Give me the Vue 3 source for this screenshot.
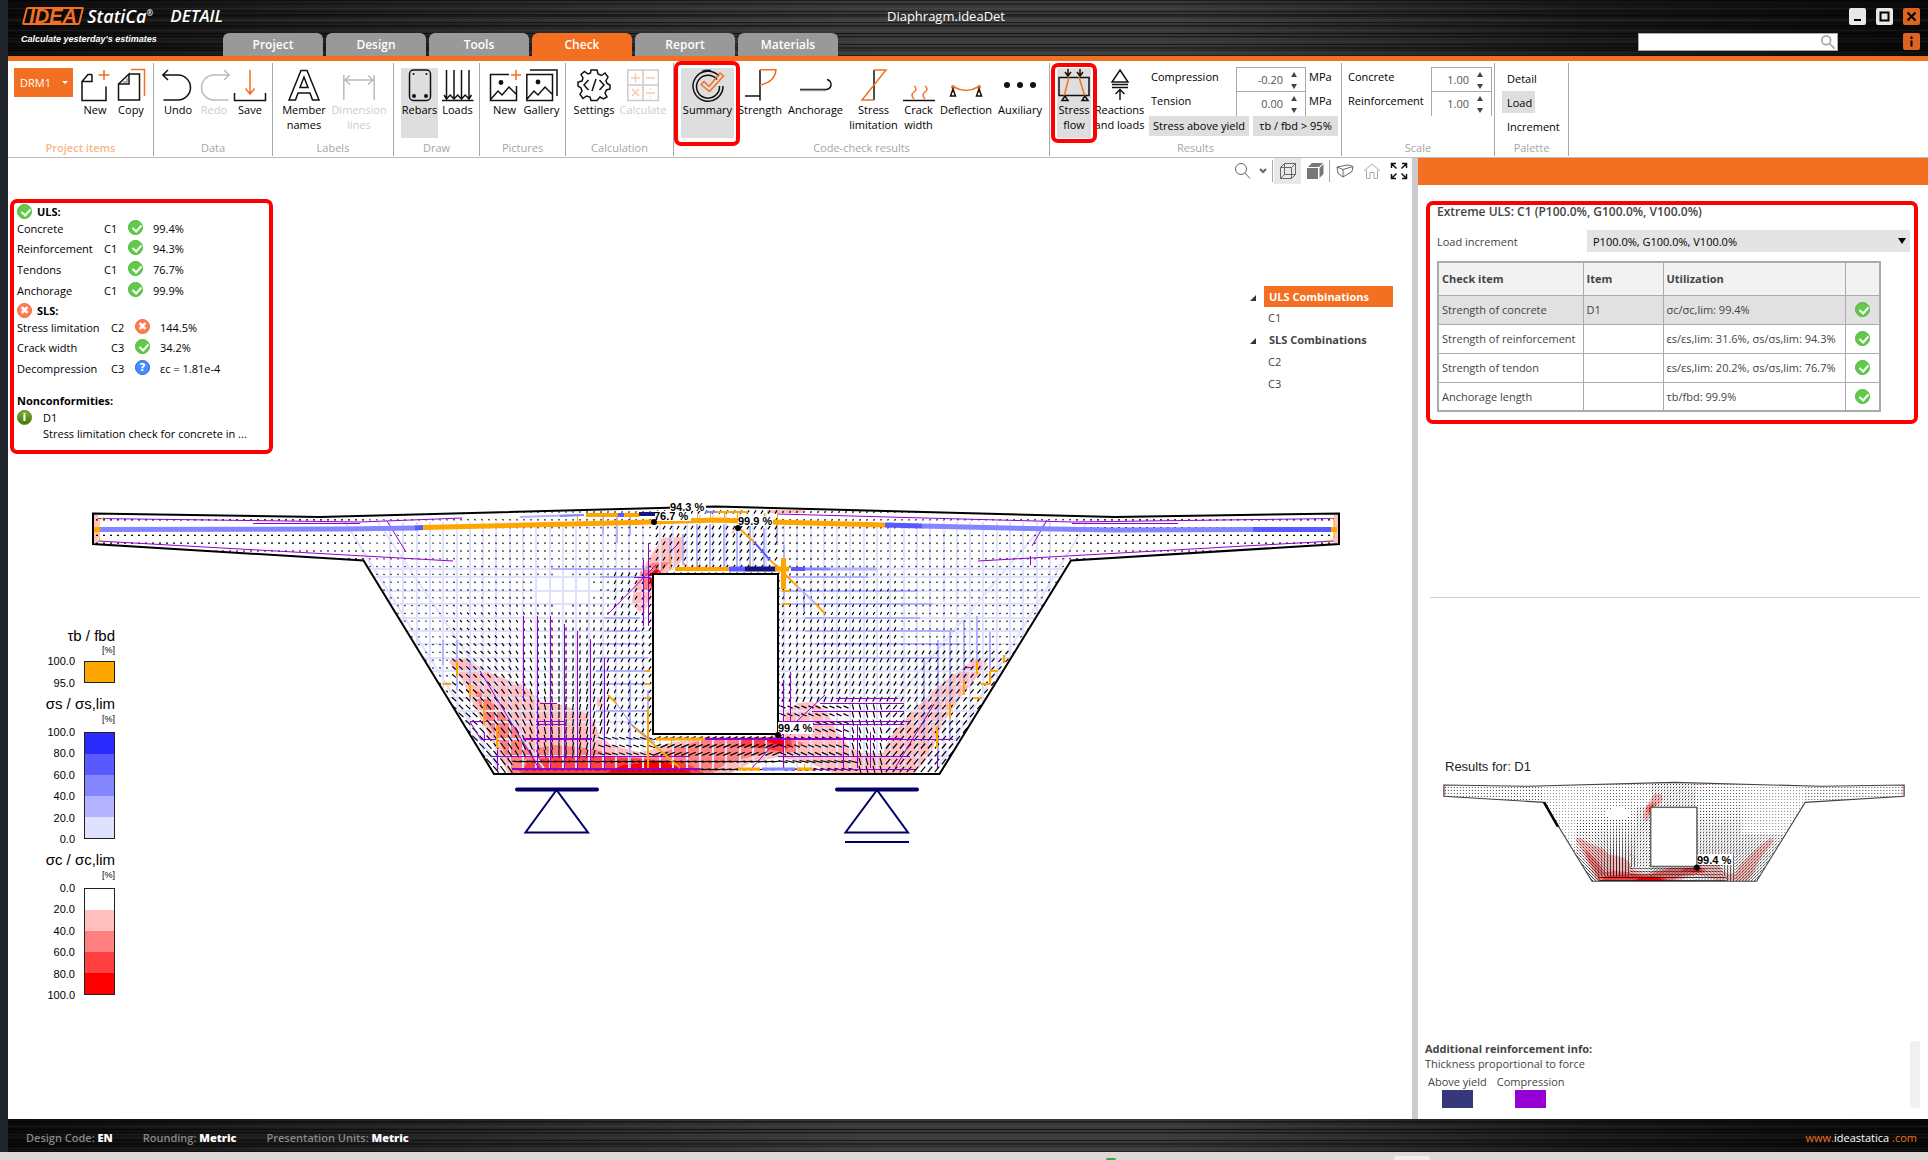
<script setup>
import { ref } from 'vue'

const tabs = ['Project', 'Design', 'Tools', 'Check', 'Report', 'Materials']
const activeTab = ref('Check')

const K = '#111'
const O = '#f36f21'
const icons = {
  new: `<path d="M13 5H9L3 12V31H27V17M13 5V12H3" transform="translate(0 .5)"/><path stroke="${O}" d="M25 1V11M19.500 6H30.500"/>`,
  copy: `<path d="M14 5H24.500V31H3.500V15L14 5V15H3.500"/><path stroke="#999" d="M12 9V13H8"/><path stroke="${O}" d="M16 .5H29.500V27"/>`,
  undo: `<path d="M6 1L.8 6L6 11M1 6H16a12.500 12.500 0 0 1 0 25H1.500"/>`,
  redo: `<path stroke="#bbb" d="M26 1L31.200 6L26 11M31 6H16a12.500 12.500 0 0 0 0 25H30.500"/>`,
  save: `<path d="M.5 24V31.500H31.500V24"/><path stroke="${O}" d="M16 1V24M11.500 19.500L16 25L20.500 19.500"/>`,
  member: `<path d="M1 31L13 1.500H19L31 31H24.500L22 24H10L7.500 31ZM12 18.500H20L16 8Z"/>`,
  dimension: `<path stroke="#bbb" d="M.8 31V6M31.200 31V6M2 11H30M7 6.500L2 11L7 15.500M25 6.500L30 11L25 15.500"/>`,
  rebars: `<rect x="5.500" y="1" width="21" height="30.500" rx="4"/><g fill="${K}" stroke="none"><circle cx="9.500" cy="5" r="1"/><circle cx="22.500" cy="5" r="1"/><circle cx="10" cy="27" r="2"/><circle cx="22" cy="27" r="2"/></g>`,
  loads: `<path d="M4.500 1V29M12 1V29M19.500 1V29M27 1V29M0 31.500H31.500M2 26L4.500 30L8.200 26L12 30L15.700 26L19.500 30L23.200 26L27 30L29.500 26"/>`,
  picnew: `<path d="M20 5.500H1.500V31.500H27.500V17M2 30L9 22L13 26L20 18L27 25"/><circle cx="12" cy="13.500" r="1.700" fill="${K}"/><path stroke="${O}" d="M27 1V11M22 6H32"/>`,
  gallery: `<path d="M.8 5.500H26.500V31.500H.8ZM1 30L8 22L12 26L19 18L26 25M4 1H31V27"/><circle cx="12" cy="13" r="1.700" fill="${K}"/>`,
  settings: `<path d="M13 1H19L20 5L23.500 6.500L27 4L30 8L28 11.500L29 14.500L32 16V20L28.500 21L27 24L29 28L25.500 30L22 28L19 31.500H13L12 28L8.500 27L5 29.500L2 25.500L4 22L3 19L0 17V13L4 12L5 9L3 5.500L6.500 2.500L10 5L12.500 4Z"/><path d="M10.500 11L6 16L10.500 21M21.500 11L26 16L21.500 21M18 10L14 22"/>`,
  calculate: `<rect x=".8" y="1" width="30.500" height="30.500" stroke="#ccc"/><g stroke="#fbc9aa"><path d="M16 1V31M1 16H31" stroke="#ccc"/><path d="M4 9H13M8.500 4.500V13.500M19 9H28M5 20L12 27M12 20L5 27M19 24H28M23.500 19.500V20.500M23.500 27.500V28.500"/></g>`,
  summary: `<path d="M27 7A15 15 0 1 0 31 17M25 10.500A11.500 11.500 0 1 0 27.500 17M19 1.500A15 15 0 0 0 10 2.500"/><path stroke="${O}" d="M9 15.500L12 12.500L17 17.500L28 4L31.500 7L17.500 22.500Z"/>`,
  strength: `<path d="M16 1V31.500M1 27H16"/><path stroke="${O}" d="M16 .8H32Q31 13 16 16"/>`,
  anchorage: `<path d="M0 20.500H25a5 5 0 0 0 2-10"/><path stroke="#999" d="M0 21.500H26"/>`,
  limitation: `<path d="M16 1V31"/><path stroke="${O}" d="M16 1H28L4 31H16"/>`,
  crack: `<path d="M0 31.500H32"/><path stroke="${O}" d="M11 30Q7 26 11 23T11 17M22 30Q18 26 22 23T22 17"/>`,
  deflection: `<path stroke="${O}" d="M4 18Q16 25 28 18"/><circle cx="3" cy="18" r="2" fill="${O}" stroke="none"/><circle cx="29" cy="18" r="2" fill="${O}" stroke="none"/><path d="M3 20L.5 27H5.500ZM29 20L26.500 27H31.500Z"/>`,
  auxiliary: `<g fill="${K}" stroke="none"><circle cx="3" cy="16" r="3"/><circle cx="16" cy="16" r="3"/><circle cx="29" cy="16" r="3"/></g>`,
  flow: `<rect x="1" y="8.500" width="30" height="18"/><path stroke="${O}" d="M11 8L6 28M21 8L27 28"/><path d="M10 0V7M7 3L10 7L13 3M22 0V7M19 3L22 7L25 3M7 27L4 31.500H10ZM27 27L24 31.500H30Z"/>`,
  reactions: `<path d="M16 1L24 13H8ZM8 15.500H24M8 18.500H24M16 31V21M11.500 25L16 20.500L20.500 25"/>`,
}

const groups = [
  { id: 'items', label: 'Project items', strong: true, buttons: [['new', 'New'], ['copy', 'Copy']] },
  { id: 'data', label: 'Data', buttons: [['undo', 'Undo'], ['redo', 'Redo', 'off'], ['save', 'Save']] },
  { id: 'labels', label: 'Labels', buttons: [['member', 'Member names'], ['dimension', 'Dimension lines', 'off']] },
  { id: 'draw', label: 'Draw', buttons: [['rebars', 'Rebars', 'on'], ['loads', 'Loads']] },
  { id: 'pictures', label: 'Pictures', buttons: [['picnew', 'New'], ['gallery', 'Gallery']] },
  { id: 'calc', label: 'Calculation', buttons: [['settings', 'Settings'], ['calculate', 'Calculate', 'off']] },
  {
    id: 'checks', label: 'Code-check results', buttons: [
      ['summary', 'Summary', 'on marked'], ['strength', 'Strength'], ['anchorage', 'Anchorage'],
      ['limitation', 'Stress limitation'], ['crack', 'Crack width'], ['deflection', 'Deflection'], ['auxiliary', 'Auxiliary'],
    ],
  },
  { id: 'results', label: 'Results', buttons: [['flow', 'Stress flow', 'on marked tight'], ['reactions', 'Reactions and loads']] },
]

const spins = {
  results: [['compression', 'Compression', '-0.20', 'MPa'], ['tension', 'Tension', '0.00', 'MPa']],
  scale: [['concrete', 'Concrete', '1.00'], ['reinforcement', 'Reinforcement', '1.00']],
}

const uls = [['Concrete', 'C1', 'ok', '99.4%'], ['Reinforcement', 'C1', 'ok', '94.3%'], ['Tendons', 'C1', 'ok', '76.7%'], ['Anchorage', 'C1', 'ok', '99.9%']]
const sls = [['Stress limitation', 'C2', 'bad', '144.5%'], ['Crack width', 'C3', 'ok', '34.2%'], ['Decompression', 'C3', 'ask', 'εc = 1.81e-4']]
const checks = [
  ['Strength of concrete', 'D1', 'σc/σc,lim: 99.4%'],
  ['Strength of reinforcement', '', 'εs/εs,lim: 31.6%, σs/σs,lim: 94.3%'],
  ['Strength of tendon', '', 'εs/εs,lim: 20.2%, σs/σs,lim: 76.7%'],
  ['Anchorage length', '', 'τb/fbd: 99.9%'],
]
const legends = [
  { id: 'bond', title: 'τb / fbd', ticks: ['100.0', '95.0'], colors: ['a1'] },
  { id: 'steel', title: 'σs / σs,lim', ticks: ['100.0', '80.0', '60.0', '40.0', '20.0', '0.0'], colors: ['b5', 'b4', 'b3', 'b2', 'b1'] },
  { id: 'conc', title: 'σc / σc,lim', ticks: ['0.0', '20.0', '40.0', '60.0', '80.0', '100.0'], colors: ['r1', 'r2', 'r3', 'r4', 'r5'] },
]

/* ---- cross-section geometry ---- */
const outline = 'M93 513.500L320 517L716 506.500L1115 517L1339 513.500V544L1071 560.500L939.500 774H494L363.500 560.500L93 544Z'
const hole = { x: 653, y: 574, width: 125, height: 160 }

const stress = [
  ['#ffbfbf', 'M449 662L452 658L458 657L468 660L488 672L513 682L523 685L541 702L562 705L586 713L595 723L600 737L611 745L639 752L651 750L668 743L709 737H770L782 720L787 710L798 703L812 702L826 710L835 728L849 747L862 753H883L890 737L911 713L934 690L957 672L977 658L987 663L980 673L961 697L943 723L931 753L915 773H833L810 763L778 757L750 763L732 773H508L496 750L480 717L462 680Z'],
  ['#ffbfbf', 'M662 538L682 537L686 552L680 563L668 572L654 575L651 600L645 610L639 612L632 602L634 587L641 572L650 557Z'],
  ['#ffbfbf', 'M767 510H805L802 513H767ZM93 515H98V543H93ZM1334 515H1339V543H1334ZM731 533L736 527L734 534ZM598 697L602 703L598 708L596 703Z'],
  ['#ff8080', 'M474 690L482 693L508 720L529 750L554 745L586 748L631 757L660 753L692 743L709 738H791L803 743L796 752L764 753L727 763L713 773H513L500 743L484 717Z'],
  ['#ff8080', 'M640 572L652 563L670 562L660 573L654 575L651 592L645 592Z'],
  ['#ff4040', 'M520 773L529 760L570 755L631 758L684 762L704 773ZM735 746L745 738L790 737L792 745L783 752L760 748Z'],
  ['#ff0000', 'M606 773L623 765L660 761L680 767L692 773ZM648 576L656 569L660 571L654 575L652 588ZM764 740L785 738L783 747Z'],
]

/* Principal stress directions sampled on a regular grid */
function hatch(step, rise, gain) {
  let d = ''
  for (let y = 512; y < 773; y += rise) {
    for (let x = 97; x < 1336; x += step) {
      if (((x - 565) / 32) ** 2 + ((y - 590) / 16) ** 2 < 1) continue
      let angle
      let len
      if (x < 364 || x > 1071) {
        angle = 2
        len = 2
      } else if (y > 758 && x > 515 && x < 860) {
        angle = x < 600 ? 5 : x < 778 ? -8 : 14
        len = 9
      } else if (x < 653) {
        angle = x < 560 ? 42 + 48 * Math.max(0, (x - 450) / 110) ** 2 : 92 + 35 * ((x - 560) / 93)
        len = 1.6 + Math.max(0, y - 590) / 26 - (x < 450 ? 3 : 0)
        if (x > 610 && y > 570) len = 4
        if (y > 735 && x > 600) { angle = 20; len = 6 }
      } else if (x < 778) {
        angle = y < 574 ? -58 : -24
        len = y < 574 ? 4 : 8
      } else {
        angle = y < 700 ? -66 + Math.max(0, (x - 860) / 8) : x < 850 ? 24 : x < 885 ? 75 : -50
        len = 1.9 + Math.max(0, y - 560) / 40
        if (x > 900 && y < 650) len = 1.6
      }
      len = Math.max(1.4, len) * gain
      const a = (angle * Math.PI) / 180
      const dx = (Math.cos(a) * len) / 2
      const dy = (Math.sin(a) * len) / 2
      d += `M${(x - dx).toFixed(1)} ${(y - dy).toFixed(1)}L${(x + dx).toFixed(1)} ${(y + dy).toFixed(1)}`
    }
  }
  return d
}
const flowMain = hatch(7, 7.8, 1)
const flowMini = hatch(8.13, 8.13, 1.3)

/* Light reinforcement mesh */
let mesh = ''
for (let x = 390; x < 650; x += 13.3) mesh += `M${x.toFixed(0)} 522V770`
for (let x = 660; x < 778; x += 13.3) mesh += `M${x.toFixed(0)} 514V570M${x.toFixed(0)} 738V770`
for (let x = 784; x < 1060; x += 13.3) mesh += `M${x.toFixed(0)} 522V770`
for (const y of [569, 577, 591, 604, 618, 631, 644, 658, 671, 684, 698, 711, 722, 739, 756]) mesh += `M368 ${y}H652M779 ${y}H1066`
mesh += 'M345 522L500 770M378 522L545 770M1087 522L936 770M1046 522L895 700'

const V = '#9400d3'
const A = '#ffa500'
const B = '#8585ff'
const L = '#b3b3ff'
const D = '#5959ff'
const N = '#141482'
const bars = [
  [L, 2, 'M551 569H650M600 577H650M604 618H640M604 631H640M596 644H640M596 658H648M596 671H648M596 684H648M596 711H648M630 680V768M648 690V768M443 640V665M457 640V665M457 655V690M470 660V700'],
  [L, 2, 'M784 577H868M784 591H918M784 604H933M805 618H920M805 631H955M815 644H960M820 658H940M924 660V745M938 640V760M950 630V740M964 620V690M977 616V670M990 632V670M784 545V600M804 590V612'],
  [L, 2, 'M617 514V543M603 514V535M630 514V535M670 535V565M683 534V565M697 524V570M710 524V570M724 524V570M737 530V570M750 526V570M764 528V570M777 522V545M784 545V600'],
  [L, 2, 'M632 739H650'],
  [V, 1, 'M98 518.500L360 522M253 523.500H360M98 541L453 561M360 522L462 518M387 521L406 552'],
  [V, 1, 'M1334 518.500L1072 522M1178 523.500H1072M1334 541L978 561M1072 522L778 514M1047 520L1032 546M1030.500 556V565'],
  [V, 1, 'M523.500 616V701M537.500 616V770M550.500 616V770M564.500 624V770M577.500 631V770M590.500 639V770M604.500 658V770'],
  [V, 1, 'M648.500 543V626M643.500 560V626M608 614L656 565M634 577.500H651M672 550L678 544'],
  [V, 1, 'M470 721.500H487M470 722L481 739.500H497M484.500 733V742M480 671L540 770M540 703.500H557M536 721.500H564M536 724.500H564M491 756.500H690M497.500 750V770'],
  [V, 2, 'M523 739H592M512 769H700M700 739H903'],
  [V, 1, 'M783.500 680V770M790.500 672V735M820 703.500H904M836 698.500H898M812 711.500H904M784 724.500H904M784 721.500H910M778 756.500H910M780 769.500H915M843.500 724V768M857.500 724V768M870.500 732V768M895 768L934 704M752 768L780 737L825 695M966 667.500H972M937.500 755V768M903 739.500H953'],
  [A, 1, 'M99 529V522Q99 518 104 518M99 529V537Q99 541 103 541M1334 529V521Q1334 518 1330 518M1334 529V536Q1334 541 1326 541'],
  [A, 2, 'M457 661V676M443 684H451M470 683V698M484 703V725M497 725V748M645 671H650M645 684H650M645 698H650M648 708V768M608 695L616 703M632 725L680 768'],
  [B, 1, 'M616 703L632 725L655 743'],
  [A, 2, 'M977 661V674M964 680V695M950 703V718M937 727V748M1004 655V663M990 671H998M990 671V684H981M973 698H982M738 527L754 542M770 560L798 587M815 603L825 614'],
  [D, 2, 'M754 542L770 560'], [L, 2, 'M798 587L815 603'],
  [A, 3, 'M656 739H705M738 769H760M797 769H813'], [B, 3, 'M762 769H795'],
  [A, 1, 'M577.500 514V523M684.500 514V521M697.500 514V521M710.500 511V521M724.500 511V521M737.500 513V521M764.500 513V521M777.500 512V527M670.500 555V570M684.500 563V570M697.500 563V570M750.500 563V570M671.500 740V745M804.500 764V771'],
  [L, 2, 'M520 517L577 515'], [B, 2, 'M560 516L584 515'], [A, 4, 'M586 515H639'], [D, 4, 'M618 515H624'], [N, 4, 'M639 514H655'], [B, 2, 'M705 512H716'], [A, 2, 'M716 512H748'],
  [A, 4, 'M675 569H730'], [D, 5, 'M729 569H745'], [N, 5, 'M745 569H776'], [A, 5, 'M775 569H789M783.500 558V589'], [D, 4, 'M791 569H805'], [B, 3, 'M805 569H830'], [L, 3, 'M830 569H877'],
  [A, 2, 'M782 591H790M782 604H790'],
  [B, 5, 'M100 529.500L345 529L416 528'], [D, 5, 'M415 528L423 527.500'], [A, 5, 'M423 527.500L654 522L716 520L773 522L885 525'],
  [D, 5, 'M885 525L922 526'], [B, 5, 'M922 526L1053 529L1115 530L1253 529.500'], [D, 5, 'M1253 529.500H1331'], [A, 5, 'M94 529.500H100M1331 529.500H1337'],
]
</script>

<template>
  <div class="desktop">
    <div class="app">
      <header class="titlebar metal">
        <div class="brand">
          <div class="logo"><span class="idea">IDEA</span><b>StatiCa<sup>®</sup></b><i>DETAIL</i></div>
          <div class="slogan">Calculate yesterday's estimates</div>
        </div>
        <nav class="tabs">
          <button v-for="t in tabs" :key="t" :class="{ active: t === activeTab }" @click="activeTab = t">{{ t }}</button>
        </nav>
        <h1>Diaphragm.ideaDet</h1>
        <div class="tools">
          <div class="winbtns">
            <button aria-label="Minimize"><svg viewBox="0 0 17 17"><path d="M5 12h7" stroke-width="2" /></svg></button>
            <button aria-label="Maximize"><svg viewBox="0 0 17 17"><path d="M4.500 4.500h8v8h-8z" stroke-width="2" /></svg></button>
            <button class="hot" aria-label="Close"><svg viewBox="0 0 17 17"><path d="M4.500 4.500l8 8M12.500 4.500l-8 8" stroke-width="2" /></svg></button>
          </div>
          <div class="findrow">
            <div class="find">
              <input type="text" aria-label="Search">
              <svg viewBox="0 0 18 18"><circle cx="7" cy="7" r="5" /><path d="M10.500 10.500l6 6" /></svg>
            </div>
            <button class="info hot" aria-label="Info"><svg viewBox="0 0 17 17"><path d="M8.500 3.500v2.500M8.500 7.500v6" stroke-width="2" /></svg></button>
          </div>
        </div>
      </header>

      <section class="ribbon">
        <div v-for="g in groups" :key="g.id" class="group" :class="g.id">
          <div class="body">
            <button v-if="g.id === 'items'" class="picker">DRM1 <span></span></button>
            <button v-for="b in g.buttons" :key="b[0]" class="cmd" :class="b[2]">
              <svg viewBox="0 0 32 33" v-html="icons[b[0]]"></svg>
              <span>{{ b[1] }}</span>
            </button>
            <div v-if="g.id === 'results'" class="fields">
              <div v-for="s in spins.results" :key="s[0]" class="field">
                <label :for="s[0]">{{ s[1] }}</label>
                <div class="spin wide"><input :id="s[0]" type="text" :value="s[2]"><span class="ud"><button aria-label="Up"></button><button class="down" aria-label="Down"></button></span></div>
                <span class="unit">{{ s[3] }}</span>
              </div>
              <div class="toggles"><button>Stress above yield</button><button>τb / fbd &gt; 95%</button></div>
            </div>
          </div>
          <div class="caption" :class="{ strong: g.strong }">{{ g.label }}</div>
        </div>
        <div class="group scale">
          <div class="body">
            <div class="fields">
              <div v-for="s in spins.scale" :key="s[0]" class="field">
                <label :for="s[0]">{{ s[1] }}</label>
                <div class="spin"><input :id="s[0]" type="text" :value="s[2]"><span class="ud"><button aria-label="Up"></button><button class="down" aria-label="Down"></button></span></div>
              </div>
            </div>
          </div>
          <div class="caption">Scale</div>
        </div>
        <div class="group palette">
          <div class="body"><button>Detail</button><button class="on">Load</button><button>Increment</button></div>
          <div class="caption">Palette</div>
        </div>
      </section>

      <main>
        <section class="canvas">
          <svg class="scene" viewBox="8 158 1404 961" role="img" aria-label="Stress flow in diaphragm">
            <defs>
              <clipPath id="section"><path :d="outline" /></clipPath>
            </defs>
            <g clip-path="url(#section)" fill="none">
              <path v-for="(s, i) in stress" :key="'s' + i" :fill="s[0]" :d="s[1]" />
              <path :d="mesh" stroke="#e0e0ff" stroke-width="2" />
              <path v-for="(b, i) in bars.slice(0, 4)" :key="'l' + i" :stroke="b[0]" :stroke-width="b[1]" :d="b[2]" />
              <path :d="flowMain" stroke="#000" stroke-width="1.200" />
              <path v-for="(b, i) in bars.slice(4)" :key="'b' + i" :stroke="b[0]" :stroke-width="b[1]" :d="b[2]" />
            </g>
            <path :d="outline" fill="none" stroke="#000" stroke-width="2" />
            <rect v-bind="hole" fill="#fff" stroke="#000" stroke-width="2" />
            <g class="marks">
              <rect x="670" y="502" width="36" height="9" /><text x="670" y="511">94.3 %</text>
              <rect x="655" y="511" width="36" height="10" /><text x="654" y="520">76.7 %</text>
              <rect x="738" y="516" width="35" height="10" /><text x="738" y="525">99.9 %</text>
              <rect x="778" y="722" width="35" height="12" /><text x="778" y="732">99.4 %</text>
              <circle cx="654" cy="522" r="3" /><circle cx="738" cy="528" r="3" /><circle cx="778" cy="735" r="3" />
            </g>
            <g fill="none" stroke="#000066" stroke-width="2">
              <path d="M517 789.500H597M837 789.500H917" stroke-width="4" stroke-linecap="round" />
              <path d="M556.500 790L525.500 832.500H588ZM877 790L845.500 832.500H908ZM845 842H909" />
            </g>
          </svg>

          <div class="viewbar">
            <button aria-label="Zoom"><svg viewBox="0 0 18 18"><circle cx="8" cy="7" r="5.500" /><path d="M12 11l5 5.500" /></svg></button>
            <button class="chev" aria-label="Zoom options"><svg viewBox="0 0 8 18"><path d="M1 7l3 3 3-3" stroke-width="2" /></svg></button>
            <i></i>
            <button class="on" aria-label="Wireframe"><svg viewBox="0 0 18 18"><path d="M1.500 5.500h11v11h-11zM1.500 5.500l4-4h11l-4 4M16.500 1.500v11l-4 4M5.500 1.500v11h11M5.500 12.500l-4 4" /></svg></button>
            <button aria-label="Solid"><svg viewBox="0 0 18 18"><path d="M1 6h11v11h-11zM2 5l4-4h11l-4 4zM13.500 6l4-4v10l-4 4z" fill="#777" stroke="none" /></svg></button>
            <i></i>
            <button aria-label="Perspective"><svg viewBox="0 0 18 18"><path d="M1 5L12 3L17 4.500L7 7.500ZM7 7.500V15L2 11.500L1 5M7 15L16 9.500L17 4.500" /></svg></button>
            <button aria-label="Home"><svg viewBox="0 0 18 18"><path d="M1 9l8-7 8 7M3.500 8v8.500h3.500v-6h4v6h3.500V8" stroke="#aaa" /></svg></button>
            <button aria-label="Fit"><svg viewBox="0 0 18 18"><path d="M1.500 6V1.500H6M2 2l4.500 4.500M12 1.500h4.500V6M16 2l-4.500 4.500M1.500 12v4.500H6M2 16l4.500-4.500M12 16.500h4.500V12M16 16l-4.500-4.500" stroke="#111" stroke-width="1.500" /></svg></button>
          </div>

          <aside class="summary">
            <h2><span class="st ok"></span>ULS:</h2>
            <div v-for="r in uls" :key="r[0]" class="row"><span>{{ r[0] }}</span><span>{{ r[1] }}</span><span class="st" :class="r[2]"></span><span>{{ r[3] }}</span></div>
            <h2><span class="st bad"></span>SLS:</h2>
            <div v-for="r in sls" :key="r[0]" class="row sls"><span>{{ r[0] }}</span><span>{{ r[1] }}</span><span class="st" :class="r[2]"></span><span>{{ r[3] }}</span></div>
            <h3>Nonconformities:</h3>
            <div class="note"><span class="st inf"></span><p>D1<br>Stress limitation check for concrete in ...</p></div>
          </aside>

          <ul class="tree">
            <li class="top sel"><span>ULS Combinations</span></li>
            <li>C1</li>
            <li class="top"><span>SLS Combinations</span></li>
            <li>C2</li>
            <li>C3</li>
          </ul>

          <div class="legends">
            <div v-for="l in legends" :key="l.id" class="legend" :class="l.id">
              <div class="lt">{{ l.title }}</div>
              <div class="lu">[%]</div>
              <div class="lb">
                <div class="ticks"><span v-for="t in l.ticks" :key="t">{{ t }}</span></div>
                <div class="ramp"><span v-for="c in l.colors" :key="c" :class="c"></span></div>
              </div>
            </div>
          </div>
        </section>

        <section class="side">
          <div class="sidehead"></div>
          <div class="extreme">
            <h2>Extreme ULS: C1 (P100.0%, G100.0%, V100.0%)</h2>
            <div class="inc">
              <label for="incr">Load increment</label>
              <div class="pick"><select id="incr"><option>P100.0%, G100.0%, V100.0%</option></select></div>
            </div>
            <table>
              <thead><tr><th class="c1">Check item</th><th class="c2">Item</th><th class="c3">Utilization</th><th class="c4"></th></tr></thead>
              <tbody>
                <tr v-for="c in checks" :key="c[0]"><td>{{ c[0] }}</td><td>{{ c[1] }}</td><td>{{ c[2] }}</td><td><span class="st ok"></span></td></tr>
              </tbody>
            </table>
          </div>
          <hr>
          <h3>Results for: D1</h3>
          <svg class="mini" viewBox="80 500 1272 282" role="img" aria-label="Results for D1">
            <g clip-path="url(#section)">
              <path v-for="(s, i) in stress" :key="i" :fill="s[0]" :d="s[1]" />
              <path :d="flowMini" stroke="#000" stroke-width="2.200" />
            </g>
            <path :d="outline" fill="none" stroke="#444" stroke-width="3" />
            <path d="M364 560L402 626" stroke="#000" stroke-width="7" />
            <rect v-bind="hole" fill="#fff" stroke="#666" stroke-width="4" />
            <rect x="780" y="700" width="95" height="30" fill="#fff" />
            <circle cx="778" cy="737" r="8" /><text x="778" y="727">99.4 %</text>
          </svg>
          <div class="extra">
            <div>
              <b>Additional reinforcement info:</b>
              <p>Thickness proportional to force</p>
              <div class="keys"><div>Above yield<span class="ky"></span></div><div>Compression<span class="kc"></span></div></div>
            </div>
            <div class="track"></div>
          </div>
        </section>
      </main>

      <footer class="metal">
        <span>Design Code: <b>EN</b></span><span>Rounding: <b>Metric</b></span><span>Presentation Units: <b>Metric</b></span>
        <a href="#">www.<em>ideastatica</em> .com</a>
      </footer>
    </div>
    <div class="taskbar"><span class="led"></span><span class="pill"></span></div>
  </div>
</template>

<style>
body { margin: 0; }
</style>

<style scoped>
* { box-sizing: border-box; }
button, input, select { font: inherit; color: inherit; border: 0; background: none; padding: 0; margin: 0; }
h1, h2, h3, p, ul { margin: 0; padding: 0; font-size: 11px; }
svg { display: block; }
.desktop { min-height: 100vh; display: flex; flex-direction: column; background: #20242b; font: 11px/15px "Open Sans", "Noto Sans", sans-serif; color: #111; }
.app { flex: 1; margin-left: 8px; display: flex; flex-direction: column; background: #fff; }
.metal {
  background:
    repeating-linear-gradient(0deg, rgba(0,0,0,.5) 0 1px, transparent 1px 3px, rgba(255,255,255,.06) 3px 4px, transparent 4px 7px, rgba(0,0,0,.4) 7px 9px, transparent 9px 11px),
    repeating-linear-gradient(0deg, rgba(255,255,255,.04) 0 2px, transparent 2px 5px, rgba(0,0,0,.3) 5px 6px, transparent 6px 17px),
    linear-gradient(90deg, #0a0a0a, #1c1c1c 14%, #3a3a3a 45%, #3a3a3a 60%, #181818 82%, #080808);
}
.titlebar { position: relative; height: 61px; border-bottom: 5px solid #f36f21; display: flex; align-items: flex-end; color: #fff; }
.brand { width: 215px; height: 56px; padding: 7px 0 0 13px; white-space: nowrap; }
.logo { display: flex; align-items: center; height: 18px; font: italic bold 18px/18px "Open Sans", sans-serif; }
.idea { position: relative; width: 67px; margin-left: 1px; text-align: center; color: #f36f21; font: italic bold 20px/18px "Liberation Sans", sans-serif; z-index: 0; }
.idea::before { content: ""; position: absolute; inset: 0 2px; border: 2px solid #f36f21; background: #0a0a0a; transform: skewX(-14deg); z-index: -1; border-radius: 2px; }
.logo b { margin-left: 3px; font-weight: 600; }
.logo sup { font-size: 8px; line-height: 8px; vertical-align: 7px; }
.logo i { margin-left: 17px; font-size: 17px; font-weight: 600; }
.slogan { margin-top: 7px; font: italic bold 9px/14px "Liberation Sans", sans-serif; }
.tabs { display: flex; gap: 3px; }
.tabs button { width: 100px; height: 23px; border-radius: 6px 6px 0 0; background: #999; font-size: 12px; font-weight: 600; line-height: 23px; }
.tabs button.active { background: #f36f21; }
.titlebar h1 { position: absolute; left: -44px; right: 0; top: 8px; margin: 0 auto; width: max-content; font-size: 13px; line-height: 17px; font-weight: normal; }
.tools { margin-left: auto; padding: 0 8px 5px 0; display: flex; flex-direction: column; gap: 8px; align-items: flex-end; }
.winbtns { display: flex; gap: 10px; }
.winbtns button, .info { width: 17px; height: 17px; background: #e8e8e8; border-radius: 2px; }
.tools .hot { background: #dc6420; }
.tools button svg { width: 17px; height: 17px; fill: none; stroke: #000; }
.findrow { display: flex; gap: 65px; }
.find { width: 200px; height: 18px; background: #fff; border: 1px solid #aaa; display: flex; }
.find input { flex: 1; min-width: 0; }
.find svg { width: 18px; height: 16px; fill: none; stroke: #aaa; stroke-width: 2; }

.ribbon { height: 97px; border-bottom: 1px solid #bbb; display: flex; padding-top: 2px; }
.group { height: 93px; border-right: 1px solid #aaa; display: flex; flex-direction: column; justify-content: space-between; }
.body { display: grid; padding: 5px 0 0 6px; height: 76px; justify-content: start; }
.items { width: 146px; } .items .body { grid-template-columns: 63px 36px 36px; }
.data { width: 119px; } .data .body { grid-template-columns: 36px 36px 36px; }
.labels { width: 121px; } .labels .body { grid-template-columns: 50px 60px; padding-left: 6px; }
.draw { width: 86px; } .draw .body { grid-template-columns: 37px 39px; padding-left: 7px; }
.pictures { width: 86px; } .pictures .body { grid-template-columns: 37px 37px; }
.calc { width: 108px; } .calc .body { grid-template-columns: 44px 54px; }
.checks { width: 376px; } .checks .body { grid-template-columns: 53px 52px 59px 57px 33px 62px 46px; padding-left: 7px; }
.results { width: 292px; } .results .body { grid-template-columns: 34px 57px auto; padding-left: 7px; }
.scale { width: 153px; }
.palette { width: 74px; }
.caption { text-align: center; color: #a5a5a5; line-height: 16px; }
.caption.strong { color: #f9b48a; font-weight: 600; }
.cmd { position: relative; height: 70px; padding-top: 1px; display: flex; flex-direction: column; align-items: center; color: #000; }
.cmd svg { width: 32px; height: 33px; flex: none; fill: none; stroke: #111; stroke-width: 1.500; overflow: visible; }
.cmd span { line-height: 15px; text-align: center; white-space: normal; }
.cmd.off { color: #ccc; }
.cmd.on { background: #dedede; }
.cmd.marked::after { content: ""; position: absolute; inset: -7px -6px -8px -7px; border: 4px solid #f00; border-radius: 7px; z-index: 3; }
.cmd.marked.tight::after { inset: -5px -6px; }
.picker { width: 59px; height: 29px; background: #f36f21; color: #fff; display: flex; align-items: center; justify-content: space-between; padding: 0 5px 0 6px; }
.picker span { border: 3px solid transparent; border-top-color: #fff; border-bottom: 0; }
.fields { white-space: nowrap; padding-left: 3px; }
.field { display: flex; height: 24px; line-height: 18px; color: #000; }
.field label { width: 85px; }
.spin { width: 61px; display: flex; border: 1px solid #aaa; border-bottom: 0; color: #555; margin-top: -1px; }
.spin.wide { width: 70px; }
.spin input { flex: 1; min-width: 0; text-align: right; line-height: 24px; }
.ud { width: 22px; display: flex; flex-direction: column; align-items: center; justify-content: space-around; }
.ud button { border: 3px solid transparent; border-bottom: 5px solid #444; border-top: 0; }
.ud button.down { border-top: 5px solid #444; border-bottom: 0; }
.unit { margin-left: 3px; }
.scale .fields { padding-left: 0; }
.scale .field label { width: 83px; }
.toggles { display: flex; gap: 4px; margin: 0 0 0 -2px; }
.toggles button { background: #dedede; height: 20px; width: 100px; line-height: 20px; color: #000; }
.toggles button + button { width: 85px; }
.palette .body { grid-template-rows: 22px 22px 22px; row-gap: 2px; padding: 4px 0 0 7px; justify-items: start; }
.palette .body button { height: 22px; padding: 0 3px 0 5px; color: #000; }
.palette .on { background: #dedede; }

main { flex: 1; display: flex; }
.canvas { position: relative; flex: 1; min-width: 0; }
.scene { width: 100%; height: auto; }
.marks { font: bold 11px "Liberation Sans", Arial, sans-serif; }
.marks rect { fill: #fff; }
.viewbar { position: absolute; top: 0; right: 0; display: flex; align-items: center; height: 26px; }
.viewbar button { width: 27px; height: 26px; display: grid; place-items: center; }
.viewbar button.chev { width: 16px; }
.viewbar svg { width: 18px; height: 18px; fill: none; stroke: #666; }
.viewbar .chev svg { width: 8px; }
.viewbar .on { background: #e8e8e8; }
.viewbar i { width: 1px; height: 22px; background: #aaa; margin: 0 1px; }

.st { position: relative; display: block; width: 15px; height: 15px; border-radius: 50%; background: #63c94b; border: 1px solid #4db83a; color: #fff; }
.st::before { content: ""; position: absolute; left: 5px; top: 2px; width: 4px; height: 7px; border: solid #fff; border-width: 0 2px 2px 0; transform: rotate(42deg); }
.st.bad { background: #ff7a4d; border-color: #f06a3c; }
.st.bad::before { content: "✖"; }
.st.ask { background: #4a8cff; border-color: #2a62dd; }
.st.ask::before { content: "?"; }
.st.inf { background: linear-gradient(#7fae2e, #3f7a08); border-color: #4d8210; }
.st.inf::before { content: "i"; }
.st.bad::before, .st.ask::before, .st.inf::before { inset: 0; width: auto; height: auto; border: 0; transform: none; font: bold 11px/13px "DejaVu Sans", sans-serif; text-align: center; }

.summary { position: absolute; left: 2px; top: 41px; width: 263px; height: 255px; border: 4px solid #f00; border-radius: 7px; padding: 1px 0 0 3px; white-space: nowrap; color: #000; }
.summary h2 { display: flex; gap: 5px; line-height: 15px; height: 15px; }
.row { display: grid; grid-template-columns: 87px 24px 25px auto; align-items: center; height: 21px; }
.row.sls { grid-template-columns: 94px 24px 25px auto; }
.row .st { top: -1px; }
.summary h2 + .row { height: 19px; }
.row + h2 { margin-top: 2px; }
.summary h3 { margin-top: 12px; line-height: 19px; }
.note { display: flex; gap: 11px; line-height: 16px; }
.tree { position: absolute; right: 19px; top: 128px; width: 129px; list-style: none; color: #444; line-height: 22px; }
.tree li { position: relative; padding-left: 4px; white-space: nowrap; }
.tree .top { font-weight: bold; padding-left: 5px; }
.tree .top::before { content: ""; position: absolute; left: -14px; top: 9px; border: 3px solid transparent; border-right-color: #333; border-bottom-color: #333; }
.tree .sel { background: #f36f21; color: #fff; line-height: 21px; }

.legends { position: absolute; left: 30px; top: 469px; width: 77px; font-family: "Liberation Sans", Arial, sans-serif; text-align: right; color: #000; white-space: nowrap; }
.lt { font-size: 15px; line-height: 18px; }
.lu { font-size: 9px; line-height: 10px; }
.bond .lu { margin-bottom: 6px; }
.legend { margin-bottom: 12px; }
.steel .lu, .conc .lu { margin: 1px 0 8px; }
.lb { display: flex; justify-content: flex-end; gap: 9px; font-size: 11px; }
.ticks { display: flex; flex-direction: column; justify-content: space-between; margin: -7px 0; line-height: 14px; }
.ramp { width: 31px; height: 107px; border: 1px solid #222; display: flex; flex-direction: column; }
.bond .ramp { height: 22px; }
.ramp span { flex: 1; }
.a1 { background: #ffa500; }
.b5 { background: #2b2bff; } .b4 { background: #5959ff; } .b3 { background: #8585ff; } .b2 { background: #b3b3ff; } .b1 { background: #e0e0ff; }
.r1 { background: #fff; } .r2 { background: #ffbfbf; } .r3 { background: #ff8080; } .r4 { background: #ff4040; } .r5 { background: #f00; }

.side { width: 516px; border-left: 6px solid #ccc; display: flex; flex-direction: column; color: #444; }
.sidehead { height: 27px; background: #f36f21; }
.extreme { margin: 16px 10px 0 8px; height: 223px; border: 4px solid #f00; border-radius: 7px; padding: 0 4px 0 7px; }
.extreme h2 { font-size: 12px; font-weight: 600; line-height: 13px; }
.inc { display: grid; grid-template-columns: 150px 1fr; margin-top: 12px; line-height: 24px; height: 22px; }
.pick { position: relative; }
.pick::after { content: ""; position: absolute; right: 4px; top: 8px; border: 4px solid transparent; border-top: 6px solid #000; border-bottom: 0; }
.inc select { appearance: none; width: 100%; height: 22px; background: #e4e4e4; border-radius: 0; color: #000; padding-left: 6px; }
table { width: 444px; margin-top: 9px; border-collapse: collapse; table-layout: fixed; border: 2px solid #aaa; white-space: nowrap; }
th, td { border: 1px solid #aaa; text-align: left; padding: 0 0 0 3px; height: 29px; }
th { height: 33px; font-weight: bold; background: #f2f2f2; }
.c1 { width: 145px; } .c2 { width: 80px; } .c3 { width: 182px; }
td .st { margin-left: 6px; }
tbody tr:first-child { background: #e1e1e1; }
hr { width: calc(100% - 20px); margin: 173px 8px 0 12px; border: 0; border-top: 1px solid #ccc; }
.side h3 { margin: 160px 0 0 27px; font: 13px/18px "Liberation Sans", Arial, sans-serif; color: #222; }
.mini { width: calc(100% - 40px); margin: 4px 0 0 21px; }
.mini text { font: bold 30px "Liberation Sans", Arial, sans-serif; }
.extra { margin-top: auto; padding: 0 8px 11px 7px; display: flex; justify-content: space-between; }
.keys { display: flex; gap: 10px; margin: 3px 0 0 3px; }
.keys span { display: block; width: 31px; height: 18px; margin: 1px auto 0; }
.ky { background: #37387c; } .kc { background: #9500d3; }
.track { width: 10px; background: #f0f0f0; border-radius: 3px; }

footer { height: 33px; display: flex; align-items: center; gap: 30px; padding: 4px 11px 0 18px; color: #888; font-weight: 600; white-space: nowrap; }
footer b { color: #fff; }
footer a { margin-left: auto; color: #f36f21; text-decoration: none; font-weight: 400; }
footer em { color: #fff; font-style: normal; }
.taskbar { height: 8px; background: #e0d8d8; display: flex; align-items: flex-end; overflow: hidden; }
.led { width: 10px; height: 2px; border-radius: 5px 5px 0 0; background: #2eb52e; margin-left: 1106px; }
.pill { width: 36px; height: 4px; margin-left: 278px; background: #f2eeee; border-radius: 3px 3px 0 0; }
</style>
